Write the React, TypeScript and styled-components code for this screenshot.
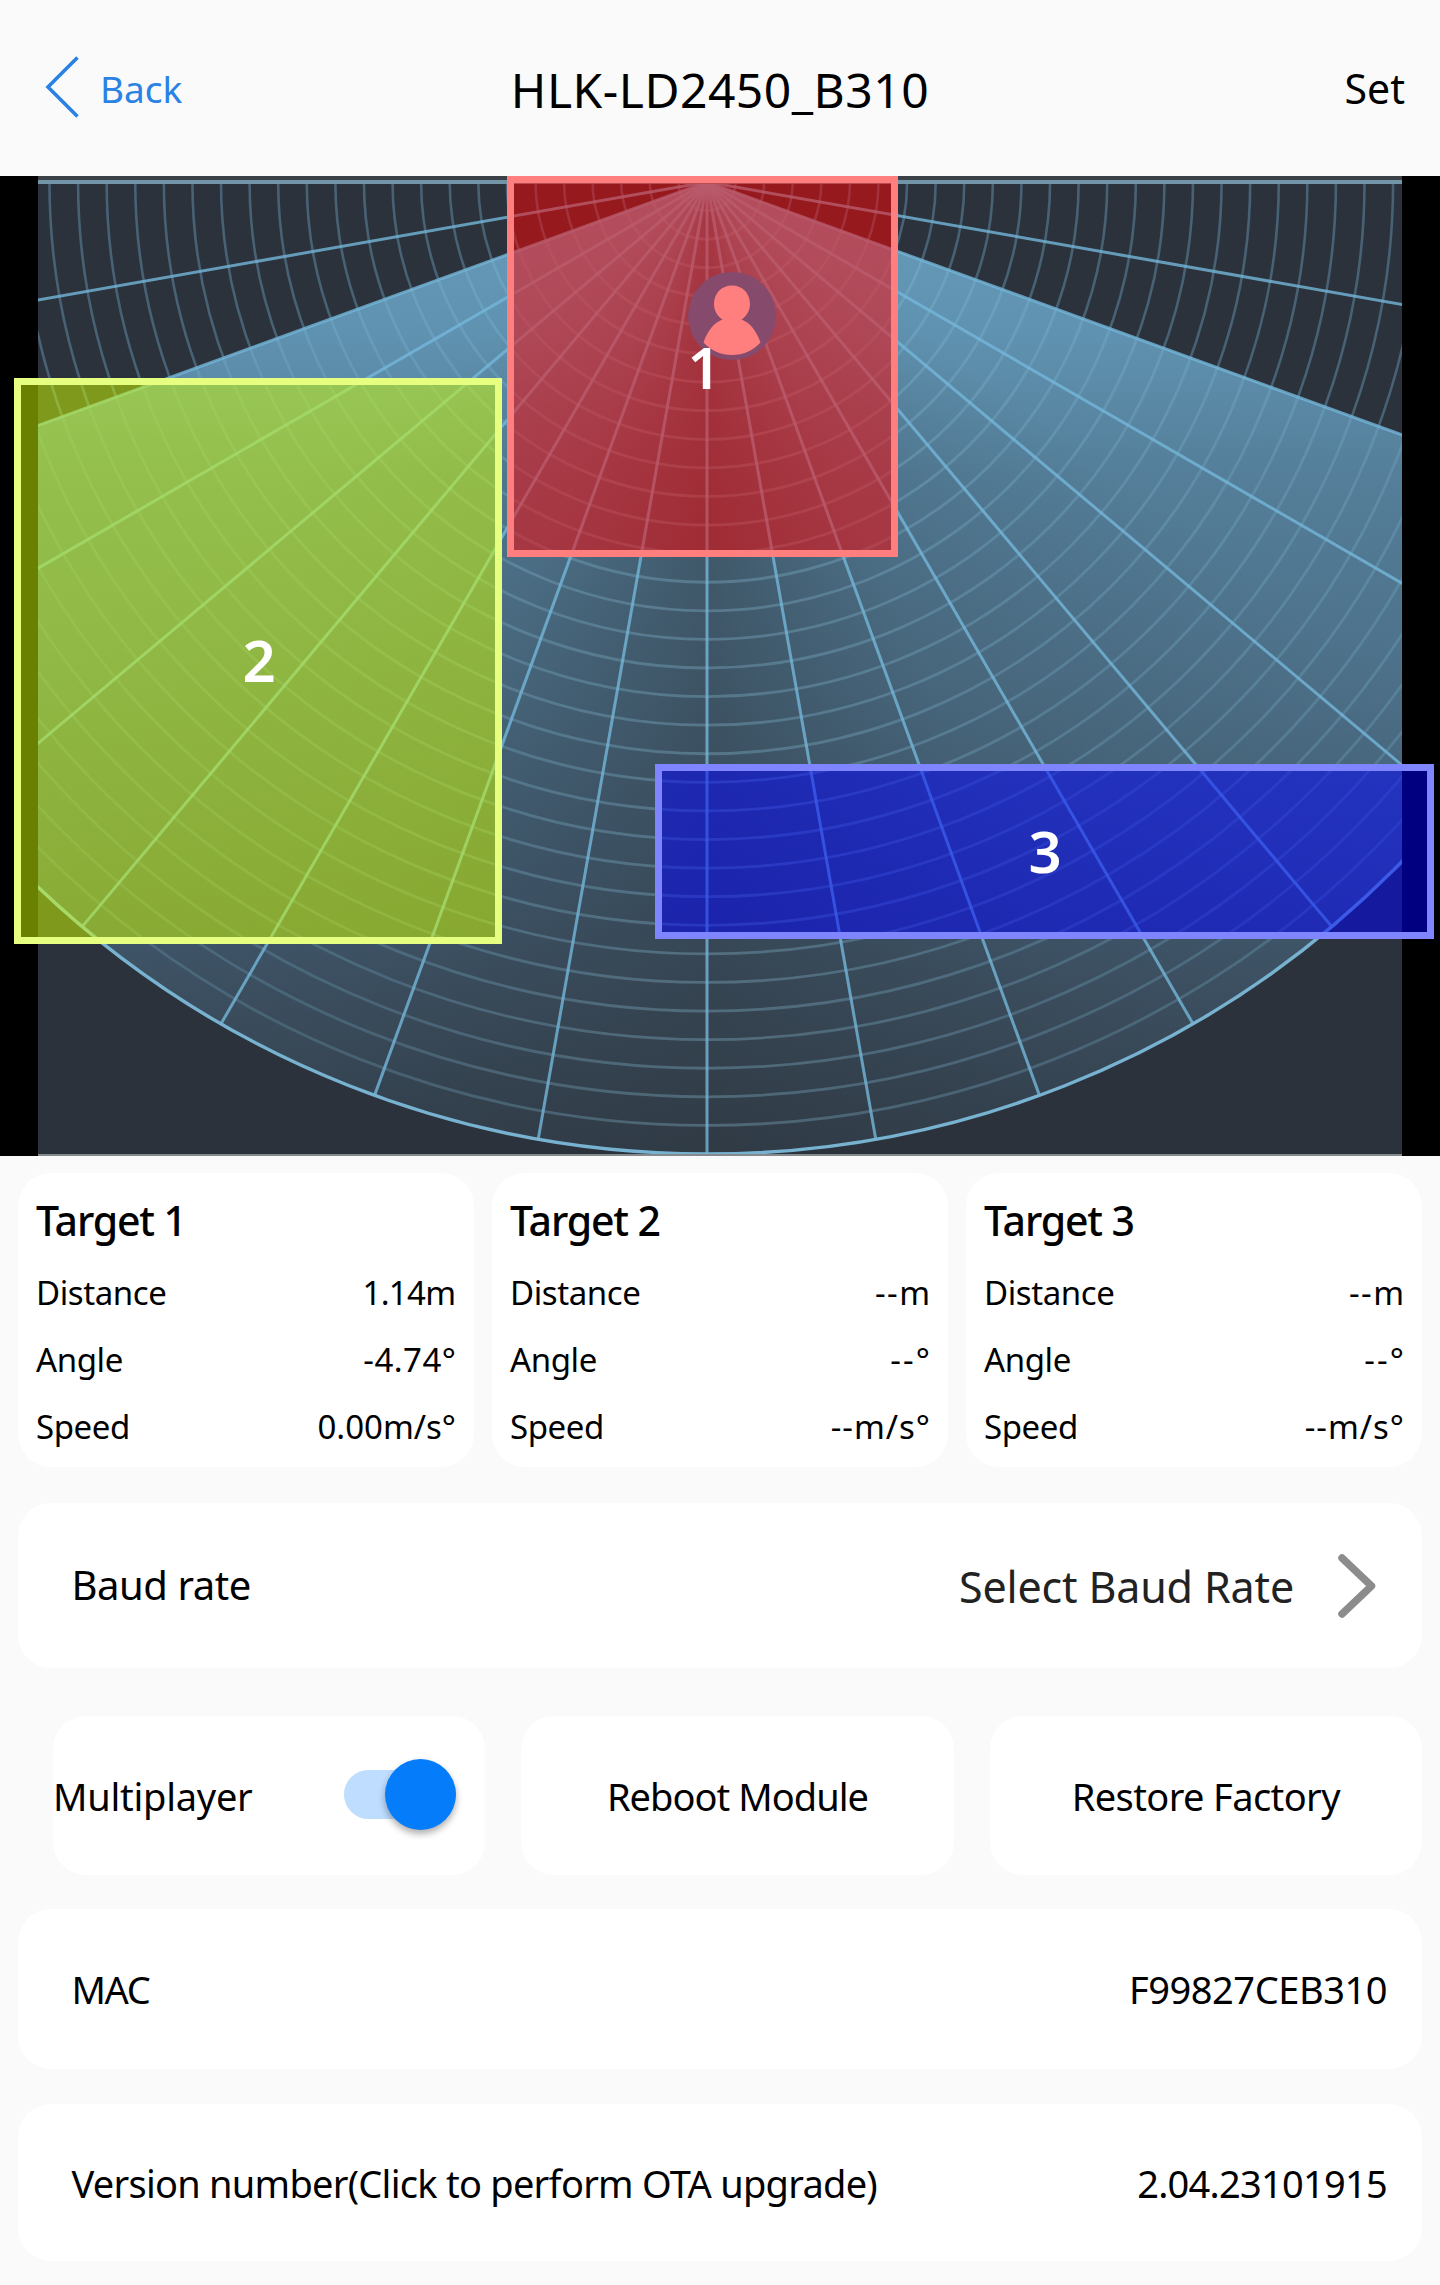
import React from 'react';
import styled, { createGlobalStyle } from 'styled-components';

const GlobalStyle = createGlobalStyle`
  *, *::before, *::after { box-sizing: border-box; }
  body {
    margin: 0;
    background: #fafafa;
    color: #000;
    font-family: 'Noto Sans', 'Open Sans', sans-serif;
  }
  button { font: inherit; color: inherit; border: 0; background: none; padding: 0; letter-spacing: inherit; }
`;

const Page = styled.main`
  width: 1440px;
  height: 2285px;
  background: #fafafa;
  overflow: hidden;
`;

const Header = styled.header`
  height: 176px;
  padding: 0 35px 0 45px;
  display: grid;
  grid-template-columns: 1fr auto 1fr;
  align-items: center;
`;

const BackButton = styled.button`
  justify-self: start;
  display: flex;
  align-items: center;
  gap: 19px;
  color: #2a82e4;
  font-size: 37px;
  letter-spacing: 0;
`;

const BackChevron = styled.svg`
  margin-top: -3px;
`;

const Title = styled.h1`
  margin: 2px 0 0 -10px;
  font-size: 48px;
  font-weight: 400;
  letter-spacing: 0.5px;
`;

const SetButton = styled.button`
  justify-self: end;
  font-size: 41px;
`;

const RadarPanel = styled.section`
  position: relative;
  height: 980px;
  padding: 0 38px;
  background: #000;
`;

const RadarView = styled.div`
  position: relative;
  height: 980px;
  background: #2b323b;
`;

const FAN_X = 669;
const FAN_Y = 6;
const FAN_R = 972;

const FanGlow = styled.div`
  position: absolute;
  inset: 0;
  background:
    conic-gradient(
      from 90deg at ${FAN_X}px ${FAN_Y}px,
      rgba(43, 50, 58, 0) 35deg,
      rgba(43, 50, 58, 0.16) 66deg,
      rgba(43, 50, 58, 0.46) 90deg,
      rgba(43, 50, 58, 0.16) 114deg,
      rgba(43, 50, 58, 0) 145deg
    ),
    linear-gradient(#699cbc 0, #5f92b0 160px, #547e99 300px, #4c6f87 520px, #435f75 700px, #3c4f60 850px, #33414e 980px);
  clip-path: path('M669 6 L2000 490.4 L2000 980 L669 978 L-600 980 L-600 467.9 Z');
`;

const RadarSvg = styled.svg`
  position: absolute;
  inset: 0;
  display: block;
`;

const Zone = styled.div<{ $x: number; $y: number; $w: number; $h: number; $line: string; $fill: string }>`
  position: absolute;
  left: ${(p) => p.$x}px;
  top: ${(p) => p.$y}px;
  width: ${(p) => p.$w}px;
  height: ${(p) => p.$h}px;
  border: 7px solid ${(p) => p.$line};
  background: ${(p) => p.$fill};
  background-clip: padding-box;
`;

const ZoneLabel = styled.span<{ $x: number; $y: number }>`
  position: absolute;
  left: ${(p) => p.$x}px;
  top: ${(p) => p.$y}px;
  transform: translate(-50%, -50%);
  color: #fff;
  font-size: 58px;
  font-weight: 570;
  line-height: 1;
`;

const Person = styled.svg`
  position: absolute;
  left: 688px;
  top: 96px;
`;

const Content = styled.div`
  padding: 17px 18px 0;
  display: flex;
  flex-direction: column;
`;

const Card = styled.section`
  background: #fff;
  border-radius: 33px;
`;

const Targets = styled.div`
  display: grid;
  grid-template-columns: repeat(3, 1fr);
  gap: 18px;
`;

const TargetCard = styled(Card)`
  height: 294px;
  padding: 13px 18px 0;
`;

const TargetTitle = styled.h2`
  margin: 0 0 5px;
  font-size: 41px;
  line-height: 68px;
  font-weight: 550;
  letter-spacing: -1.15px;
`;

const Reading = styled.div`
  height: 67px;
  display: flex;
  align-items: center;
  justify-content: space-between;
  font-size: 33px;
  letter-spacing: -0.4px;
`;

const Value = styled.span<{ $tracking: number }>`
  letter-spacing: ${(p) => p.$tracking}px;
  margin-right: ${(p) => -p.$tracking}px;
`;

const InfoCard = styled(Card)<{ $top: number; $height: number }>`
  margin-top: ${(p) => p.$top}px;
  height: ${(p) => p.$height}px;
  padding: 0 35px 0 53.5px;
  display: flex;
  align-items: center;
  justify-content: space-between;
  font-size: 38px;
  letter-spacing: -0.45px;
`;

const Tight = styled.span<{ $tracking?: number }>`
  letter-spacing: ${(p) => p.$tracking ?? -0.74}px;
`;

const BaudLabel = styled.span`
  padding-bottom: 2px;
  font-size: 40px;
`;

const BaudPicker = styled.button`
  display: flex;
  align-items: center;
  gap: 43px;
  margin-right: 10px;
  font-size: 43px;
  letter-spacing: -0.15px;
  color: #222;
`;

const BaudValue = styled.span`
  padding-top: 2px;
`;

const Actions = styled.div`
  margin: 48px 0 0 35px;
  display: grid;
  grid-template-columns: repeat(3, 1fr);
  gap: 36px;
`;

const Action = styled(Card)<{ $tracking?: number }>`
  height: 159px;
  display: flex;
  align-items: center;
  justify-content: center;
  font-size: 38px;
  letter-spacing: ${(p) => p.$tracking ?? -0.25}px;
`;

const MultiplayerCard = styled(Action)`
  justify-content: space-between;
  padding-right: 29px;
`;

const SwitchTrack = styled.div`
  width: 112px;
  height: 49px;
  margin-bottom: 2px;
  border-radius: 25px;
  background: #bfddff;
  display: flex;
  align-items: center;
  justify-content: flex-end;
`;

const SwitchThumb = styled.div`
  flex: none;
  width: 71px;
  height: 71px;
  border-radius: 50%;
  background: #057dfb;
  box-shadow: 0 4px 7px rgba(0, 0, 0, 0.32);
`;

const rad = (deg: number) => (deg * Math.PI) / 180;
const rings = Array.from({ length: 33 }, (_, i) => ((i + 1) * FAN_R) / 34);
const bearings = Array.from({ length: 17 }, (_, i) => (i + 1) * 10);

function RadarGrid() {
  return (
    <RadarSvg width="1364" height="980" viewBox="0 0 1364 980" fill="none">
      <defs>
        <clipPath id="below-horizon">
          <rect x="0" y="6" width="1364" height="974" />
        </clipPath>
        <clipPath id="fan">
          <path d="M669 6 2000 490.400V980H-600V467.900Z" />
        </clipPath>
        <clipPath id="outside-fan">
          <path d="M669 6 2000 490.400V6Z M669 6-600 467.900V6Z" />
        </clipPath>
        <linearGradient id="ring" gradientUnits="userSpaceOnUse" x1="0" y1="0" x2="1364" y2="0">
          <stop offset="0" stopColor="#84c0de" stopOpacity="0.18" />
          <stop offset="0.25" stopColor="#84c0de" stopOpacity="0.22" />
          <stop offset="0.49" stopColor="#84b6cc" stopOpacity="0.36" />
          <stop offset="0.75" stopColor="#84c0de" stopOpacity="0.24" />
          <stop offset="1" stopColor="#84c0de" stopOpacity="0.22" />
        </linearGradient>
      </defs>
      <path
        fill="#2b323b"
        fillRule="evenodd"
        d={`M-400 6H1764V980H-400Z M${FAN_X - FAN_R} ${FAN_Y} a${FAN_R} ${FAN_R} 0 0 0 ${FAN_R * 2} 0 Z`}
      />
      <g clipPath="url(#below-horizon)">
        <g clipPath="url(#outside-fan)">
          {rings.map((r) => (
            <circle key={r} cx={FAN_X} cy={FAN_Y} r={r} stroke="#7ab8da" strokeOpacity="0.36" strokeWidth="2.6" />
          ))}
        </g>
        <g clipPath="url(#fan)">
          {rings.map((r) => (
            <circle key={r} cx={FAN_X} cy={FAN_Y} r={r} stroke="url(#ring)" strokeWidth="2.8" />
          ))}
        </g>
        {bearings.map((a) => (
          <line
            key={a}
            x1={FAN_X}
            y1={FAN_Y}
            x2={FAN_X + FAN_R * Math.cos(rad(a))}
            y2={FAN_Y + FAN_R * Math.sin(rad(a))}
            stroke="#74b6da"
            strokeOpacity="0.8"
            strokeWidth="3"
          />
        ))}
        <circle cx={FAN_X} cy={FAN_Y} r={FAN_R} stroke="#78b2d1" strokeWidth="3.4" />
      </g>
      <rect width="1364" height="4" fill="#3b4047" />
      <rect y="4" width="1364" height="4" fill="#7195a6" />
      <rect y="978" width="1364" height="2" fill="#85898e" />
    </RadarSvg>
  );
}

const zones = [
  { id: 2, x: 14, y: 202, w: 488, h: 566, line: '#e6ff80', fill: 'rgba(212,255,0,.5)', lx: 259, ly: 484 },
  { id: 3, x: 655, y: 588, w: 779, h: 175, line: '#7f85ff', fill: 'rgba(0,0,255,.5)', lx: 1045, ly: 675 },
  { id: 1, x: 507, y: 0, w: 391, h: 381, line: '#ff7f7f', fill: 'rgba(255,0,0,.5)', lx: 704, ly: 191 },
];

const targets = [
  { name: 'Target 1', distance: '1.14m', angle: '-4.74°', speed: '0.00m/s°' },
  { name: 'Target 2', distance: '--m', angle: '--°', speed: '--m/s°' },
  { name: 'Target 3', distance: '--m', angle: '--°', speed: '--m/s°' },
];

export default function App() {
  return (
    <>
      <GlobalStyle />
      <Page>
        <Header>
          <BackButton>
            <BackChevron width="36" height="64" viewBox="0 0 36 64" fill="none">
              <path d="M32.5 2.5 3 32l29.5 29.5" stroke="#2a82e4" strokeWidth="3.6" />
            </BackChevron>
            Back
          </BackButton>
          <Title>HLK-LD2450_B310</Title>
          <SetButton>Set</SetButton>
        </Header>

        <RadarPanel>
          <RadarView>
            <FanGlow />
            <RadarGrid />
          </RadarView>
          {zones.map((z) => (
            <Zone key={z.id} $x={z.x} $y={z.y} $w={z.w} $h={z.h} $line={z.line} $fill={z.fill} />
          ))}
          <Person width="88" height="88" viewBox="0 0 88 88">
            <circle cx="44" cy="44" r="44" fill="#864a6c" />
            <path
              d="M44 13.5c10.5 0 18 8 18 18.5 0 6.5-3.5 12.5-8.5 15.5C62 50.5 68.500 59 72.5 70.5 65.5 78.5 55 83 44 83S22.500 78.5 15.5 70.5C19.5 59 26 50.5 34.5 47.5 29.5 44.5 26 38.5 26 32 26 21.5 33.5 13.5 44 13.5Z"
              fill="#ff7f7f"
            />
          </Person>
          {zones.map((z) => (
            <ZoneLabel key={z.id} $x={z.lx} $y={z.ly}>
              {z.id}
            </ZoneLabel>
          ))}
        </RadarPanel>

        <Content>
          <Targets>
            {targets.map((t, i) => (
              <TargetCard key={t.name}>
                <TargetTitle>{t.name}</TargetTitle>
                <Reading>
                  <span>Distance</span>
                  <Value $tracking={i ? 1.4 : -0.7}>{t.distance}</Value>
                </Reading>
                <Reading>
                  <span>Angle</span>
                  <Value $tracking={i ? 2.2 : 0.5}>{t.angle}</Value>
                </Reading>
                <Reading>
                  <span>Speed</span>
                  <Value $tracking={i ? 1 : 0}>{t.speed}</Value>
                </Reading>
              </TargetCard>
            ))}
          </Targets>

          <InfoCard $top={36} $height={165}>
            <BaudLabel>Baud rate</BaudLabel>
            <BaudPicker>
              <BaudValue>Select Baud Rate</BaudValue>
              <svg width="40" height="66" viewBox="0 0 40 66" fill="none">
                <path d="M5 5 34.5 33 5 61" stroke="#8c8c8c" strokeWidth="7.5" strokeLinecap="round" strokeLinejoin="round" />
              </svg>
            </BaudPicker>
          </InfoCard>

          <Actions>
            <MultiplayerCard>
              Multiplayer
              <SwitchTrack>
                <SwitchThumb />
              </SwitchTrack>
            </MultiplayerCard>
            <Action $tracking={-0.95}>Reboot Module</Action>
            <Action $tracking={-0.6}>Restore Factory</Action>
          </Actions>

          <InfoCard $top={34} $height={160}>
            <Tight $tracking={-1.4}>MAC</Tight>
            <span>F99827CEB310</span>
          </InfoCard>
          <InfoCard $top={35} $height={157}>
            <Tight>Version number(Click to perform OTA upgrade)</Tight>
            <Tight>2.04.23101915</Tight>
          </InfoCard>
        </Content>
      </Page>
    </>
  );
}
